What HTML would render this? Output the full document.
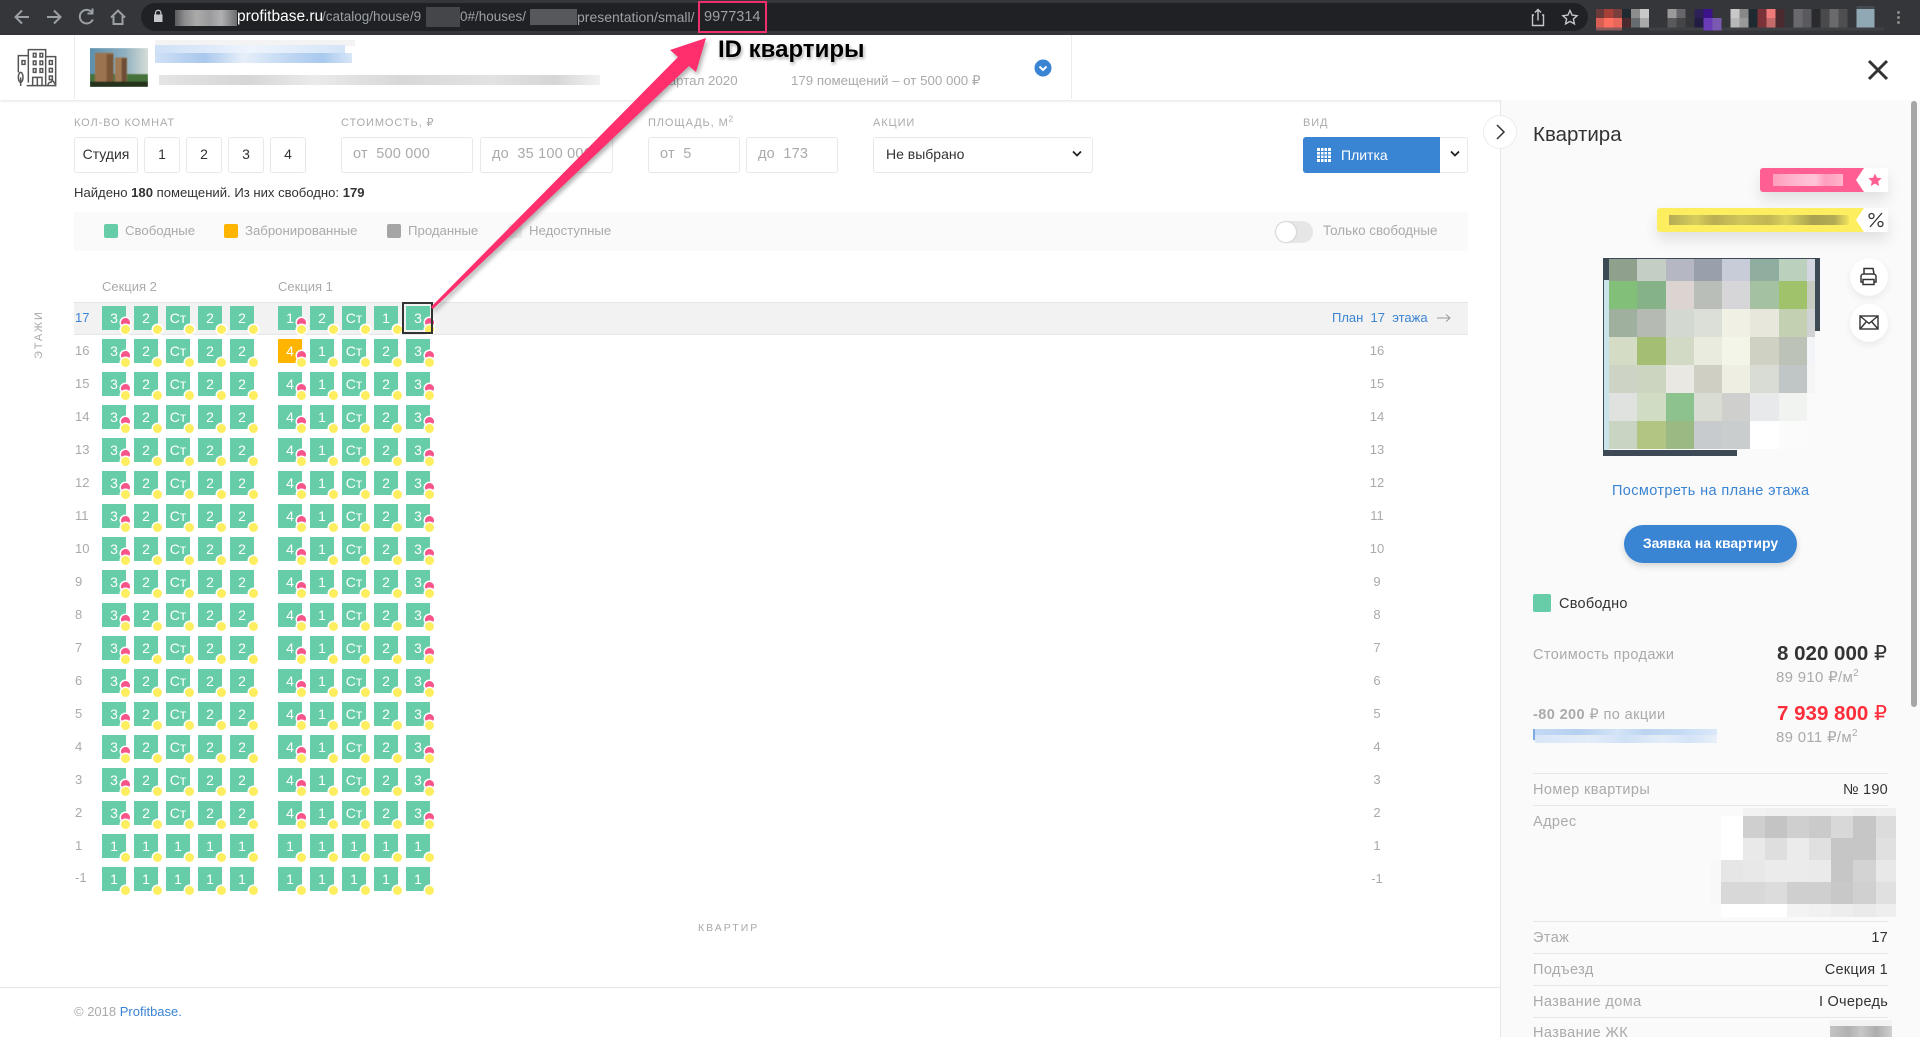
<!DOCTYPE html>
<html lang="ru"><head><meta charset="utf-8"><title>Profitbase</title>
<style>
html,body{margin:0;padding:0;width:1920px;height:1037px;overflow:hidden;background:#fff;font-family:"Liberation Sans",sans-serif;color:#333}
*{box-sizing:border-box}
.a{position:absolute;white-space:nowrap}
.l{font-size:11px;letter-spacing:.9px;color:#aaa;line-height:14px;top:116px}
.bx{position:absolute;top:137px;height:36px;border:1px solid #e8e8e8;border-radius:3px;background:#fff;font-size:14px;line-height:33px;text-align:center;color:#333}
.in{text-align:left;padding-left:11px;color:#aaa;font-size:14.500px;letter-spacing:.2px}
.lg{font-size:13.200px;color:#aaa;top:223px;line-height:16px}
.sw{position:absolute;top:224px;width:14px;height:14px;border-radius:2px}
.r{position:absolute;left:0;width:1500px;height:24px}
.n{position:absolute;left:75px;top:0;line-height:24px;font-size:13px;color:#aaa}
.m{position:absolute;left:1337px;width:80px;text-align:center;top:0;line-height:24px;font-size:13px;color:#aaa}
.c{position:absolute;left:102px;top:0;display:flex;gap:8px}
.c b{position:relative;display:block;width:24px;height:24px;background:#66cda8;color:#fff;font-weight:400;font-size:14px;line-height:24px;text-align:center}
.c b:nth-child(6){margin-left:16px}
.c b::after{content:"";position:absolute;left:18.500px;top:19px;width:9px;height:9px;border-radius:50%;background:#fdee60;box-shadow:0 0 0 1.500px #fff}
.c b.p::before{content:"";position:absolute;left:18.500px;top:12px;width:9px;height:9px;border-radius:50%;background:#f7548a;box-shadow:0 0 0 1.500px #fff}
.c b.o{background:#ffb400}
.k{position:absolute;left:1533px;font-size:14.500px;letter-spacing:.4px;color:#aaa;line-height:18px}
.v{position:absolute;right:32px;font-size:14.500px;letter-spacing:.25px;color:#333;line-height:18px}
.ln{position:absolute;left:1533px;width:355px;height:1px;background:#e6e6e6}
.g{position:absolute;display:grid}
.g i{display:block}
.u{position:absolute;top:8px;font-size:13.500px;line-height:18px;color:#9aa0a6;white-space:nowrap}
sup{font-size:10px;line-height:0}
</style></head><body>

<!-- browser bar -->
<div class="a" style="left:0;top:0;width:1920px;height:35px;background:#35363a"></div>
<div class="a" style="left:141px;top:3px;width:1447px;height:28px;border-radius:14px;background:#202124"></div>
<svg class="a" style="left:0;top:0" width="170" height="35" fill="none" stroke="#9aa0a6" stroke-width="2">
<path d="M29 17H16M22 10.500L15.500 17l6.500 6.500"/><path d="M47 17h13M54 10.500l6.500 6.500-6.500 6.500"/>
<path d="M92 12.500a6.800 6.800 0 1 0 .8 7M92.500 8.500v5h-5"/><path d="M111 17.500l7-7 7 7M113.500 16v8h9v-8"/>
<path d="M154 14.500h8.500v7.500H154z" fill="#c4c7c9" stroke="none"/><path d="M155.500 15v-2a2.700 2.700 0 0 1 5.400 0v2" stroke="#c4c7c9" stroke-width="1.300"/></svg>
<div class="a" style="left:175px;top:10px;width:62px;height:16px;background:linear-gradient(90deg,#5a5b5e,#8c8c8e 15%,#aaa 35%,#9a9a9c 55%,#b0b0b2 75%,#6c6d70)"></div>
<div class="u" style="left:237px;font-size:15.500px;color:#fff">profitbase.ru</div>
<div class="u" style="left:322px">/catalog/house/9</div>
<div class="a" style="left:426px;top:7px;width:34px;height:20px;background:#44464a"></div>
<div class="u" style="left:460px">0#/houses/</div>
<div class="a" style="left:530px;top:9px;width:47px;height:16px;background:#57585b"></div>
<div class="u" style="left:577px;font-size:14px">presentation/small/</div>
<div class="u" style="left:704px;font-size:14.500px">9977314</div>
<div class="a" style="left:698px;top:1px;width:69px;height:32px;border:2px solid #f0306c"></div>
<svg class="a" style="left:1525px;top:5px" width="60" height="26" fill="none" stroke="#c4c7c9" stroke-width="1.400">
<path d="M9 10H7.500v10.500h11V10H17M13 15.500V4.500M10 7.500l3-3 3 3"/><path d="M45 5.500l2.100 4.600 5 .6-3.700 3.300 1 4.900-4.400-2.500-4.400 2.500 1-4.900-3.700-3.300 5-.6z"/></svg>
<svg class="a" style="left:1596px;top:6px" width="300" height="26" viewBox="0 0 900 78" shape-rendering="crispEdges">
<g transform="translate(-228,-18)">
<rect x="228" y="27" width="24" height="27" fill="#6b3a3a"/><rect x="252" y="27" width="28" height="27" fill="#a53f38"/><rect x="280" y="27" width="26" height="27" fill="#7a3e3c"/>
<rect x="228" y="54" width="24" height="28" fill="#d95f54"/><rect x="252" y="54" width="28" height="28" fill="#ff6f60"/><rect x="280" y="54" width="26" height="28" fill="#e8665a"/><rect x="228" y="82" width="78" height="10" fill="#8a5a5a"/>
<rect x="306" y="27" width="27" height="27" fill="#1f2a30"/><rect x="306" y="54" width="27" height="28" fill="#4a2a2e"/>
<rect x="333" y="27" width="27" height="27" fill="#8d8d8d"/><rect x="360" y="27" width="27" height="27" fill="#c8c8c8"/><rect x="333" y="54" width="27" height="28" fill="#666c70"/><rect x="360" y="54" width="27" height="28" fill="#a9a9a9"/>
<rect x="387" y="82" width="705" height="10" fill="#3f4044"/>
<rect x="442" y="27" width="27" height="27" fill="#9a9a9a"/><rect x="442" y="54" width="27" height="28" fill="#5a5a5c"/><rect x="469" y="27" width="27" height="27" fill="#66666a"/><rect x="469" y="54" width="27" height="28" fill="#454548"/>
<rect x="523" y="27" width="27" height="27" fill="#2d2056"/><rect x="523" y="54" width="27" height="28" fill="#221c44"/><rect x="550" y="27" width="27" height="27" fill="#3a1488"/><rect x="550" y="54" width="27" height="38" fill="#6a3cb8"/><rect x="577" y="54" width="27" height="38" fill="#7a5ab0"/>
<rect x="631" y="27" width="27" height="27" fill="#c8c8c8"/><rect x="631" y="54" width="27" height="28" fill="#b8b8b8"/><rect x="658" y="27" width="27" height="27" fill="#888"/><rect x="658" y="54" width="27" height="28" fill="#999"/>
<rect x="685" y="27" width="27" height="55" fill="#1f2a30"/>
<rect x="712" y="27" width="27" height="55" fill="#7a3238"/><rect x="739" y="27" width="27" height="27" fill="#f07a7a"/><rect x="739" y="54" width="27" height="28" fill="#c46a6a"/><rect x="766" y="27" width="27" height="55" fill="#4a2a2e"/>
<rect x="820" y="27" width="27" height="55" fill="#6a6a6e"/><rect x="847" y="27" width="27" height="55" fill="#5a5a5e"/><rect x="874" y="27" width="27" height="55" fill="#2a2b2e"/>
<rect x="901" y="27" width="27" height="55" fill="#4a4a4c"/><rect x="928" y="27" width="27" height="55" fill="#6a6a6c"/><rect x="955" y="27" width="27" height="55" fill="#4f4f52"/>
<rect x="1010" y="18" width="54" height="9" fill="#444a50"/><rect x="1010" y="27" width="54" height="55" fill="#90a8b4"/>
</g></svg>
<div class="a" style="left:1897px;top:11px;width:3px;height:3px;border-radius:50%;background:#8a8a8a"></div>
<div class="a" style="left:1897px;top:16px;width:3px;height:3px;border-radius:50%;background:#8a8a8a"></div>
<div class="a" style="left:1897px;top:21px;width:3px;height:3px;border-radius:50%;background:#8a8a8a"></div>

<!-- header -->
<div class="a" style="left:0;top:35px;width:1920px;height:65px;background:#fff;box-shadow:0 1px 3px rgba(0,0,0,.12)"></div>
<div class="a" style="left:74px;top:35px;width:1px;height:64px;background:#ececec"></div>
<div class="a" style="left:1071px;top:35px;width:1px;height:64px;background:#ececec"></div>
<svg class="a" style="left:10px;top:40px" width="150" height="56" viewBox="0 0 450 168" fill="none" stroke="#555" stroke-width="4.500">
<path d="M55 128V29h52v108M55 47H25v50M107 50h30v87H50"/>
<path d="M70 40h8v11h-8zM90 40h8v11h-8zM70 63h8v11h-8zM90 63h8v11h-8zM70 86h8v11h-8zM90 86h8v11h-8zM36 62h9v11h-9zM118 62h9v11h-9zM118 85h9v11h-9zM118 108h9v11h-9z"/>
<path d="M68 137v-25h28v25M82 112v25"/>
<ellipse cx="32" cy="112" rx="7" ry="15"/><path d="M32 112v26"/><path d="M114 136c0-7 5-10 9-9 1-6 8-5 9 1 3 1 4 5 3 8"/></svg>
<svg class="a" style="left:90px;top:48px" width="58" height="39" viewBox="0 0 174 116">
<defs><linearGradient id="sk" x1="0" y1="0" x2="1" y2="0"><stop offset="0" stop-color="#5c8fae"/><stop offset=".6" stop-color="#8fb0c0"/><stop offset="1" stop-color="#d6ddd6"/></linearGradient><filter id="bl"><feGaussianBlur stdDeviation="1.800"/></filter></defs>
<rect width="174" height="116" fill="url(#sk)"/>
<g filter="url(#bl)"><rect x="0" y="78" width="174" height="38" fill="#44713a"/><rect x="15" y="14" width="55" height="88" fill="#9b7350"/><rect x="50" y="18" width="20" height="84" fill="#7a5638"/><rect x="75" y="28" width="36" height="76" fill="#a07a55"/><rect x="95" y="30" width="15" height="74" fill="#6d4e35"/><rect x="0" y="100" width="174" height="16" fill="#26321c"/></g></svg>
<div class="a" style="left:155px;top:40px;width:200px;height:6px;background:#f3f3f3"></div>
<div class="a" style="left:155px;top:45px;width:190px;height:9px;background:linear-gradient(90deg,#cfe1f7,#dfeafa 30%,#eef4fc 50%,#d4e4f8)"></div>
<div class="a" style="left:155px;top:53px;width:197px;height:10px;background:linear-gradient(90deg,#cfe0f6,#a9c8ed 25%,#e6eff9 45%,#bcd5f2 70%,#a8c9ee 85%,#d8e6f8)"></div>
<div class="a" style="left:159px;top:75px;width:441px;height:10px;background:linear-gradient(90deg,#e4e4e4,#d6d6d6 20%,#eaeaea 35%,#d8d8d8 55%,#e2e2e2 75%,#d6d6d6 90%,#f2f2f2)"></div>
<div class="a" style="left:656px;top:73px;font-size:13.300px;line-height:16px;color:#aaa">квартал 2020</div>
<div class="a" style="left:791px;top:73px;font-size:13.300px;line-height:16px;color:#aaa">179 помещений – от 500 000 ₽</div>
<svg class="a" style="left:1034px;top:59px" width="18" height="18"><circle cx="9" cy="9" r="8.500" fill="#3a84d4"/><path d="M5.500 7.500L9 11l3.500-3.500" fill="none" stroke="#fff" stroke-width="2"/></svg>
<svg class="a" style="left:1866px;top:59px" width="24" height="22"><path d="M3 2l18 18M21 2L3 20" stroke="#333" stroke-width="3" fill="none"/></svg>

<!-- filters -->
<div class="a l" style="left:74px">КОЛ-ВО КОМНАТ</div>
<div class="bx" style="left:74px;width:64px">Студия</div>
<div class="bx" style="left:144px;width:36px">1</div>
<div class="bx" style="left:186px;width:36px">2</div>
<div class="bx" style="left:228px;width:36px">3</div>
<div class="bx" style="left:270px;width:36px">4</div>
<div class="a l" style="left:341px">СТОИМОСТЬ, ₽</div>
<div class="bx in" style="left:341px;width:132px">от&nbsp; 500 000</div>
<div class="bx in" style="left:480px;width:133px">до&nbsp; 35 100 000</div>
<div class="a l" style="left:648px">ПЛОЩАДЬ, М<sup style="font-size:8px">2</sup></div>
<div class="bx in" style="left:648px;width:92px">от&nbsp; 5</div>
<div class="bx in" style="left:746px;width:92px">до&nbsp; 173</div>
<div class="a l" style="left:873px">АКЦИИ</div>
<div class="bx" style="left:873px;width:220px;text-align:left;padding-left:12px">Не выбрано</div>
<svg class="a" style="left:1072px;top:150px" width="10" height="8"><path d="M1 1.500L5 5.500l4-4" fill="none" stroke="#222" stroke-width="1.800"/></svg>
<div class="a l" style="left:1303px">ВИД</div>
<div class="a" style="left:1303px;top:137px;width:165px;height:36px;border:1px solid #e8e8e8;border-radius:3px;background:#fff"></div>
<div class="a" style="left:1303px;top:137px;width:137px;height:36px;background:#3a84d4;border-radius:3px 0 0 3px"></div>
<svg class="a" style="left:1317px;top:148px" width="14" height="14" fill="#fff"><path d="M0 0h3v3H0zM4 0h2.500v3H4zM7.500 0H10v3H7.500zM11 0h3v3h-3zM0 4h3v2.500H0zM4 4h2.500v2.500H4zM7.500 4H10v2.500H7.500zM11 4h3v2.500h-3zM0 7.500h3V10H0zM4 7.500h2.500V10H4zM7.500 7.500H10V10H7.500zM11 7.500h3V10h-3zM0 11h3v3H0zM4 11h2.500v3H4zM7.500 11H10v3H7.500zM11 11h3v3h-3z"/></svg>
<div class="a" style="left:1341px;top:146px;font-size:14px;line-height:18px;color:#fff">Плитка</div>
<svg class="a" style="left:1450px;top:150px" width="10" height="8"><path d="M1 1.500L5 5.500l4-4" fill="none" stroke="#222" stroke-width="1.800"/></svg>
<div class="a" style="left:74px;top:185px;font-size:13.100px;line-height:16px;color:#333">Найдено <b>180</b> помещений. Из них свободно: <b>179</b></div>

<!-- legend -->
<div class="a" style="left:74px;top:212px;width:1394px;height:39px;background:#fafafa"></div>
<div class="sw" style="left:104px;background:#66cda8"></div><div class="a lg" style="left:125px">Свободные</div>
<div class="sw" style="left:224px;background:#ffb400"></div><div class="a lg" style="left:245px">Забронированные</div>
<div class="sw" style="left:387px;background:#a5a5a5"></div><div class="a lg" style="left:408px">Проданные</div>
<div class="sw" style="left:508px;background:#ececec"></div><div class="a lg" style="left:529px">Недоступные</div>
<div class="a" style="left:1275px;top:221px;width:38px;height:22px;border-radius:11px;background:#e6e6e6"></div>
<div class="a" style="left:1276px;top:222px;width:20px;height:20px;border-radius:50%;background:#fff;box-shadow:0 0 2px rgba(0,0,0,.2)"></div>
<div class="a lg" style="left:1323px;font-size:13.400px">Только свободные</div>

<!-- grid -->
<div class="a" style="left:102px;top:279px;font-size:13px;line-height:16px;color:#aaa">Секция 2</div>
<div class="a" style="left:278px;top:279px;font-size:13px;line-height:16px;color:#aaa">Секция 1</div>
<div class="a" style="left:17px;top:330px;width:44px;text-align:center;font-size:11px;letter-spacing:1.800px;line-height:14px;color:#aaa;transform:rotate(-90deg)">ЭТАЖИ</div>
<div class="a" style="left:74px;top:302px;width:1394px;height:33px;background:#f2f2f2;border-top:1px solid #e6e6e6;border-bottom:1px solid #e6e6e6"></div>

<div class="r" style="top:306px"><span class="n" style="color:#3a84d4">17</span><div class="c"><b class="p">3</b><b>2</b><b>Ст</b><b>2</b><b>2</b><b class="p">1</b><b>2</b><b>Ст</b><b>1</b><b class="p">3</b></div></div>
<div class="a" style="left:1332px;top:310px;font-size:13px;line-height:16px;color:#3a84d4">План&nbsp; 17&nbsp; этажа</div>
<svg class="a" style="left:1436px;top:313px" width="16" height="10"><path d="M1 5h13M10 1.500L14 5l-4 3.500" fill="none" stroke="#999" stroke-width="1"/></svg>
<div class="a" style="left:402px;top:302px;width:31px;height:32px;border:2px solid #333"></div>

<div class="r" style="top:339px"><span class="n">16</span><span class="m">16</span><div class="c"><b class="p">3</b><b>2</b><b>Ст</b><b>2</b><b>2</b><b class="p o">4</b><b>1</b><b>Ст</b><b>2</b><b class="p">3</b></div></div>
<div class="r" style="top:372px"><span class="n">15</span><span class="m">15</span><div class="c"><b class="p">3</b><b>2</b><b>Ст</b><b>2</b><b>2</b><b class="p">4</b><b>1</b><b>Ст</b><b>2</b><b class="p">3</b></div></div>
<div class="r" style="top:405px"><span class="n">14</span><span class="m">14</span><div class="c"><b class="p">3</b><b>2</b><b>Ст</b><b>2</b><b>2</b><b class="p">4</b><b>1</b><b>Ст</b><b>2</b><b class="p">3</b></div></div>
<div class="r" style="top:438px"><span class="n">13</span><span class="m">13</span><div class="c"><b class="p">3</b><b>2</b><b>Ст</b><b>2</b><b>2</b><b class="p">4</b><b>1</b><b>Ст</b><b>2</b><b class="p">3</b></div></div>
<div class="r" style="top:471px"><span class="n">12</span><span class="m">12</span><div class="c"><b class="p">3</b><b>2</b><b>Ст</b><b>2</b><b>2</b><b class="p">4</b><b>1</b><b>Ст</b><b>2</b><b class="p">3</b></div></div>
<div class="r" style="top:504px"><span class="n">11</span><span class="m">11</span><div class="c"><b class="p">3</b><b>2</b><b>Ст</b><b>2</b><b>2</b><b class="p">4</b><b>1</b><b>Ст</b><b>2</b><b class="p">3</b></div></div>
<div class="r" style="top:537px"><span class="n">10</span><span class="m">10</span><div class="c"><b class="p">3</b><b>2</b><b>Ст</b><b>2</b><b>2</b><b class="p">4</b><b>1</b><b>Ст</b><b>2</b><b class="p">3</b></div></div>
<div class="r" style="top:570px"><span class="n">9</span><span class="m">9</span><div class="c"><b class="p">3</b><b>2</b><b>Ст</b><b>2</b><b>2</b><b class="p">4</b><b>1</b><b>Ст</b><b>2</b><b class="p">3</b></div></div>
<div class="r" style="top:603px"><span class="n">8</span><span class="m">8</span><div class="c"><b class="p">3</b><b>2</b><b>Ст</b><b>2</b><b>2</b><b class="p">4</b><b>1</b><b>Ст</b><b>2</b><b class="p">3</b></div></div>
<div class="r" style="top:636px"><span class="n">7</span><span class="m">7</span><div class="c"><b class="p">3</b><b>2</b><b>Ст</b><b>2</b><b>2</b><b class="p">4</b><b>1</b><b>Ст</b><b>2</b><b class="p">3</b></div></div>
<div class="r" style="top:669px"><span class="n">6</span><span class="m">6</span><div class="c"><b class="p">3</b><b>2</b><b>Ст</b><b>2</b><b>2</b><b class="p">4</b><b>1</b><b>Ст</b><b>2</b><b class="p">3</b></div></div>
<div class="r" style="top:702px"><span class="n">5</span><span class="m">5</span><div class="c"><b class="p">3</b><b>2</b><b>Ст</b><b>2</b><b>2</b><b class="p">4</b><b>1</b><b>Ст</b><b>2</b><b class="p">3</b></div></div>
<div class="r" style="top:735px"><span class="n">4</span><span class="m">4</span><div class="c"><b class="p">3</b><b>2</b><b>Ст</b><b>2</b><b>2</b><b class="p">4</b><b>1</b><b>Ст</b><b>2</b><b class="p">3</b></div></div>
<div class="r" style="top:768px"><span class="n">3</span><span class="m">3</span><div class="c"><b class="p">3</b><b>2</b><b>Ст</b><b>2</b><b>2</b><b class="p">4</b><b>1</b><b>Ст</b><b>2</b><b class="p">3</b></div></div>
<div class="r" style="top:801px"><span class="n">2</span><span class="m">2</span><div class="c"><b class="p">3</b><b>2</b><b>Ст</b><b>2</b><b>2</b><b class="p">4</b><b>1</b><b>Ст</b><b>2</b><b class="p">3</b></div></div>
<div class="r" style="top:834px"><span class="n">1</span><span class="m">1</span><div class="c"><b>1</b><b>1</b><b>1</b><b>1</b><b>1</b><b>1</b><b>1</b><b>1</b><b>1</b><b>1</b></div></div>
<div class="r" style="top:867px"><span class="n" style="top:-1px">-1</span><span class="m">-1</span><div class="c"><b>1</b><b>1</b><b>1</b><b>1</b><b>1</b><b>1</b><b>1</b><b>1</b><b>1</b><b>1</b></div></div>

<div class="a" style="left:698px;top:921px;font-size:10.500px;letter-spacing:2px;line-height:14px;color:#aaa">КВАРТИР</div>
<div class="a" style="left:0;top:987px;width:1500px;height:1px;background:#e6e6e6"></div>
<div class="a" style="left:74px;top:1004px;font-size:13px;line-height:16px;color:#aaa">© 2018 <span style="color:#3a84d4">Profitbase.</span></div>

<!-- right panel -->
<div class="a" style="left:1500px;top:100px;width:420px;height:937px;background:#fafafa;border-left:1px solid #e6e6e6"></div>
<div class="a" style="left:1911px;top:101px;width:6px;height:606px;border-radius:3px;background:#a6a6a6"></div>
<svg class="a" style="left:1482px;top:114px" width="36" height="36"><circle cx="18" cy="18" r="16.500" fill="#fff" stroke="#ececec"/><path d="M15 11l7 7-7 7" fill="none" stroke="#333" stroke-width="1.500"/></svg>
<div class="a" style="left:1533px;top:123px;font-size:20.500px;line-height:24px;color:#333">Квартира</div>

<div class="a" style="left:1760px;top:168px;width:128px;height:24px;border-radius:3px;background:#ff5f92;box-shadow:0 8px 14px rgba(0,0,0,.1)"></div>
<div class="a" style="left:1773px;top:174px;width:70px;height:12px;background:linear-gradient(90deg,#ff9dbd,#ffb5cd 30%,#ffc4d7 60%,#ff9dbd 75%,#ffb5cd)"></div>
<svg class="a" style="left:1855px;top:168px" width="33" height="24"><path d="M9 0h24v24H9L1 12z" fill="#fff"/><path d="M20 5.500l2 4.300 4.700.5-3.500 3.100 1 4.600-4.200-2.400-4.200 2.400 1-4.600-3.500-3.100 4.700-.5z" fill="#ff5f92"/></svg>
<div class="a" style="left:1657px;top:208px;width:231px;height:24px;border-radius:3px;background:#fdee60;box-shadow:0 8px 14px rgba(0,0,0,.1)"></div>
<div class="a" style="left:1669px;top:215px;width:180px;height:10px;background:linear-gradient(90deg,#b5ab55,#d6cd5c 15%,#b9ae52 25%,#cfc65a 40%,#c0b654 55%,#dcd35e 65%,#a9a150 80%,#b5ab55 92%,#f0e35e)"></div>
<svg class="a" style="left:1855px;top:208px" width="33" height="24"><path d="M9 0h24v24H9L1 12z" fill="#fff"/><path d="M27 5L15 19" stroke="#333" stroke-width="1.300"/><circle cx="16.500" cy="8" r="2.500" fill="none" stroke="#333" stroke-width="1.300"/><circle cx="25.500" cy="16" r="2.500" fill="none" stroke="#333" stroke-width="1.300"/></svg>

<!-- plan -->
<div class="a" style="left:1603px;top:258px;width:217px;height:73px;background:#3d4a55"></div>
<div class="a" style="left:1603px;top:258px;width:6px;height:198px;background:#3d4a55"></div>
<div class="a" style="left:1603px;top:450px;width:134px;height:6px;background:#3d4a55"></div>
<div class="a" style="left:1604px;top:280px;width:5px;height:170px;background:#c9e3e8"></div>
<div class="g" style="left:1609px;top:259px;grid-template-columns:28px 29px 28px 28px 28px 29px 28px 8px;grid-template-rows:22px repeat(6,28px)">
<i style="background:#8fa08c"></i><i style="background:#c5cec5"></i><i style="background:#b5b8c2"></i><i style="background:#9aa0ab"></i><i style="background:#c8cbd8"></i><i style="background:#8fae9f"></i><i style="background:#bbd0bd"></i><i style="background:#d5d6e0"></i>
<i style="background:#82bf79"></i><i style="background:#86b287"></i><i style="background:#dcd4d1"></i><i style="background:#b9bfb8"></i><i style="background:#d6d5d7"></i><i style="background:#a4c1a1"></i><i style="background:#a0c26b"></i><i style="background:#c8ccc0"></i>
<i style="background:#a0b09f"></i><i style="background:#b5bab3"></i><i style="background:#d3d9d0"></i><i style="background:#dcdfd7"></i><i style="background:#f0f1e4"></i><i style="background:#e8e7dc"></i><i style="background:#c3d0b2"></i><i style="background:#d0d2d4"></i>
<i style="background:#d4dcc5"></i><i style="background:#a4be73"></i><i style="background:#d2d9c5"></i><i style="background:#eaebdf"></i><i style="background:#f3f5e8"></i><i style="background:#cfd1c2"></i><i style="background:#bcc2b8"></i><i style="background:#f3f4f7"></i>
<i style="background:#cdd4c5"></i><i style="background:#cbd5bf"></i><i style="background:#eae8e3"></i><i style="background:#cfcfc3"></i><i style="background:#eeefe2"></i><i style="background:#d9dbd5"></i><i style="background:#c0c5c5"></i><i style="background:#f5f5f5"></i>
<i style="background:#e0e2e0"></i><i style="background:#d0dcc4"></i><i style="background:#8cc28d"></i><i style="background:#d8dcd2"></i><i style="background:#cfcfcd"></i><i style="background:#e8e9eb"></i><i style="background:#f1f3f1"></i><i style="background:#fafafa"></i>
<i style="background:#c9d5c2"></i><i style="background:#b0c682"></i><i style="background:#9ab983"></i><i style="background:#c7cbce"></i><i style="background:#c9cdce"></i><i style="background:#fff"></i><i style="background:#fbfbfb"></i><i style="background:#fafafa"></i>
</div>
<div class="a" style="left:1850px;top:258px;width:38px;height:38px;border-radius:50%;background:#fff;box-shadow:0 3px 8px rgba(0,0,0,.07)"></div>
<div class="a" style="left:1850px;top:304px;width:38px;height:38px;border-radius:50%;background:#fff;box-shadow:0 3px 8px rgba(0,0,0,.07)"></div>
<svg class="a" style="left:1859px;top:267px" width="20" height="20" fill="none" stroke="#333" stroke-width="1.500"><path d="M5 7V1.500h9L15 7M4 15H2V9.500A2.500 2.500 0 0 1 4.500 7h10A2.500 2.500 0 0 1 17 9.500V15h-2"/><path d="M4 12.500h11v5H4z"/></svg>
<svg class="a" style="left:1859px;top:315px" width="20" height="16" fill="none" stroke="#333" stroke-width="1.400"><rect x="1" y="1" width="18" height="13"/><path d="M1 1l9 7.500L19 1M1 14l6.500-7.500M19 14l-6.500-7.500"/></svg>
<div class="a" style="left:1612px;top:482px;font-size:14.500px;letter-spacing:.38px;line-height:18px;color:#3a84d4">Посмотреть на плане этажа</div>
<div class="a" style="left:1624px;top:525px;width:173px;height:38px;border-radius:19px;background:#3a84d4;color:#fff;font-size:14px;font-weight:700;line-height:36px;text-align:center;box-shadow:0 3px 7px rgba(0,0,0,.15)">Заявка на квартиру</div>
<div class="a" style="left:1533px;top:594px;width:18px;height:18px;border-radius:2px;background:#66cda8"></div>
<div class="a" style="left:1559px;top:595px;font-size:14.500px;letter-spacing:.25px;line-height:18px;color:#333">Свободно</div>

<div class="k" style="top:646px">Стоимость продажи</div>
<div class="v" style="top:642px;right:33px;letter-spacing:0;font-size:20.500px;font-weight:700;line-height:24px">8 020 000 <span style="font-weight:400">₽</span></div>
<div class="a" style="left:1776px;top:669px;font-size:15px;letter-spacing:.3px;line-height:18px;color:#aaa">89 910 ₽/м<sup>2</sup></div>
<div class="k" style="top:706px"><b>-80 200</b> ₽ по акции</div>
<div class="v" style="top:702px;right:33px;letter-spacing:0;font-size:20.500px;font-weight:700;line-height:24px;color:#ff2d39">7 939 800 <span style="font-weight:400">₽</span></div>
<div class="a" style="left:1776px;top:729px;font-size:15px;letter-spacing:.3px;line-height:18px;color:#aaa">89 011 ₽/м<sup>2</sup></div>
<div class="a" style="left:1533px;top:729px;width:2px;height:11px;background:#7fabe4"></div>
<div class="a" style="left:1535px;top:729px;width:182px;height:6px;background:linear-gradient(90deg,#c3d9f3,#b5d0f0 25%,#d5e4f7 45%,#bcd4f1 60%,#c5dbf4 80%,#dbe8f8)"></div>
<div class="a" style="left:1535px;top:735px;width:182px;height:8px;background:linear-gradient(90deg,#d8e6f7,#e3edf9 30%,#cfe0f5 50%,#e3edf9 70%,#d3e3f6 85%,#e8f0fa)"></div>

<div class="ln" style="top:773px"></div>
<div class="k" style="top:781px">Номер квартиры</div><div class="v" style="top:781px">№ 190</div>
<div class="ln" style="top:805px"></div>
<div class="k" style="top:813px">Адрес</div>
<div class="g" style="left:1710px;top:808px;grid-template-columns:11px 22px 22px 22px 22px 22px 22px 23px 20px;grid-template-rows:8px 22px 22px 22px 22px 13px">
<i style="background:#fafafa"></i><i style="background:#fafafa"></i><i style="background:#f2f2f2"></i><i style="background:#f0f0f0"></i><i style="background:#f0f0f0"></i><i style="background:#f0f0f0"></i><i style="background:#f1f1f1"></i><i style="background:#eee"></i><i style="background:#efefef"></i>
<i style="background:#fafafa"></i><i style="background:#fff"></i><i style="background:#cfcfcf"></i><i style="background:#c4c4c4"></i><i style="background:#cfcfcf"></i><i style="background:#cacaca"></i><i style="background:#d8d8d8"></i><i style="background:#c6c6c6"></i><i style="background:#dcdcdc"></i>
<i style="background:#fafafa"></i><i style="background:#fff"></i><i style="background:#e9e9e9"></i><i style="background:#dedede"></i><i style="background:#ebebeb"></i><i style="background:#e0e0e0"></i><i style="background:#c6c6c6"></i><i style="background:#c6c6c6"></i><i style="background:#e0e0e0"></i>
<i style="background:#f8f8f8"></i><i style="background:#e6e6e6"></i><i style="background:#e8e8e8"></i><i style="background:#ebebeb"></i><i style="background:#ebebeb"></i><i style="background:#eaeaea"></i><i style="background:#c6c6c6"></i><i style="background:#d3d3d3"></i><i style="background:#e8e8e8"></i>
<i style="background:#f8f8f8"></i><i style="background:#d8d8d8"></i><i style="background:#d8d8d8"></i><i style="background:#dcdcdc"></i><i style="background:#cfcfcf"></i><i style="background:#cfcfcf"></i><i style="background:#c8c8c8"></i><i style="background:#d0d0d0"></i><i style="background:#e0e0e0"></i>
<i style="background:#fafafa"></i><i style="background:#fff"></i><i style="background:#fff"></i><i style="background:#fff"></i><i style="background:#f3f3f3"></i><i style="background:#f1f1f1"></i><i style="background:#ededed"></i><i style="background:#eaeaea"></i><i style="background:#eee"></i>
</div>
<div class="ln" style="top:921px"></div>
<div class="k" style="top:929px">Этаж</div><div class="v" style="top:929px">17</div>
<div class="ln" style="top:953px"></div>
<div class="k" style="top:961px">Подъезд</div><div class="v" style="top:961px">Секция 1</div>
<div class="ln" style="top:985px"></div>
<div class="k" style="top:993px">Название дома</div><div class="v" style="top:993px">I Очередь</div>
<div class="ln" style="top:1017px"></div>
<div class="k" style="top:1024px">Название ЖК</div>
<div class="a" style="left:1830px;top:1020px;width:62px;height:6px;background:#f2f2f2"></div>
<div class="a" style="left:1830px;top:1026px;width:62px;height:11px;background:linear-gradient(90deg,#c4c4c4,#b0b0b0 30%,#c8c8c8 50%,#adadad 75%,#d0d0d0)"></div>

<!-- annotation arrow -->
<svg class="a" style="left:0;top:0;filter:drop-shadow(2px 3px 2px rgba(0,0,0,.3))" width="800" height="330"><polygon points="431,307 678,57 670,50 706,38 696,72 689,66 433,309" fill="#ff2f6d"/></svg>
<div class="a" style="left:718px;top:37px;font-size:24px;font-weight:700;line-height:26px;color:#000;text-shadow:0 0 2px #fff,1px 2px 3px rgba(0,0,0,.4)">ID квартиры</div>
</body></html>
